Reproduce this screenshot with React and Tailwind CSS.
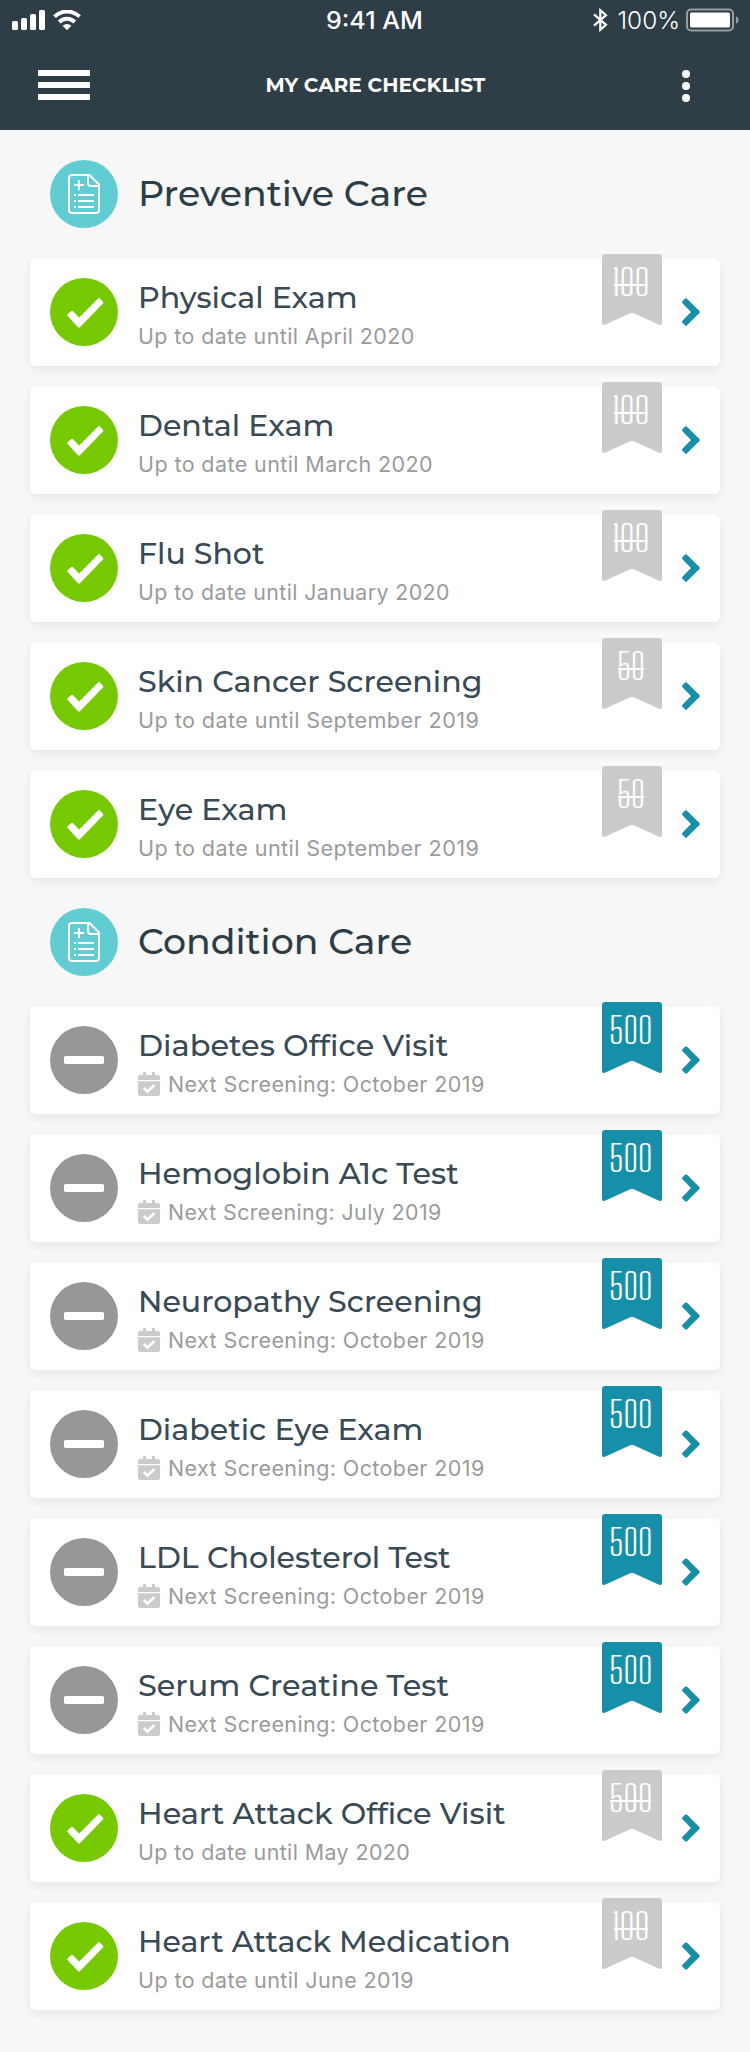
import React, { useLayoutEffect, useRef, useState } from "react";

function FitText({ width, className = "", center = false, children }) {
  const ref = useRef(null);
  const [scale, setScale] = useState(1);
  useLayoutEffect(() => {
    const fit = () => {
      if (ref.current) setScale(width / ref.current.offsetWidth);
    };
    fit();
    document.fonts?.ready.then(fit);
  }, [width, children]);
  return (
    <span
      ref={ref}
      className={`inline-block whitespace-nowrap ${center ? "origin-center" : "origin-left"} ${className}`}
      style={{ transform: `scaleX(${scale})` }}
    >
      {children}
    </span>
  );
}

const preventive = [
  { title: "Physical Exam", w: 220, note: "Up to date until April 2020", nw: 277, points: "100", done: true },
  { title: "Dental Exam", w: 196, note: "Up to date until March 2020", nw: 295, points: "100", done: true },
  { title: "Flu Shot", w: 126, note: "Up to date until January 2020", nw: 312, points: "100", done: true },
  { title: "Skin Cancer Screening", w: 344, note: "Up to date until September 2019", nw: 341, points: "50", done: true },
  { title: "Eye Exam", w: 150, note: "Up to date until September 2019", nw: 341, points: "50", done: true },
];

const condition = [
  { title: "Diabetes Office Visit", w: 310, note: "Next Screening: October 2019", nw: 317, points: "500" },
  { title: "Hemoglobin A1c Test", w: 321, note: "Next Screening: July 2019", nw: 274, points: "500" },
  { title: "Neuropathy Screening", w: 345, note: "Next Screening: October 2019", nw: 317, points: "500" },
  { title: "Diabetic Eye Exam", w: 285, note: "Next Screening: October 2019", nw: 317, points: "500" },
  { title: "LDL Cholesterol Test", w: 313, note: "Next Screening: October 2019", nw: 317, points: "500" },
  { title: "Serum Creatine Test", w: 311, note: "Next Screening: October 2019", nw: 317, points: "500" },
  { title: "Heart Attack Office Visit", w: 368, note: "Up to date until May 2020", nw: 272, points: "500", done: true },
  { title: "Heart Attack Medication", w: 373, note: "Up to date until June 2019", nw: 276, points: "100", done: true },
];

const pointWidths = { 50: 28, 100: 38, 500: 43 };
const strikeWidths = { 50: 26, 100: 34, 500: 41 };

function StatusBar() {
  return (
    <div className="grid h-10 grid-cols-3 items-center pl-3 pr-[10px]">
      <div className="flex items-center gap-2">
        <svg width="33" height="20" viewBox="0 0 33 20" fill="white">
          <rect x="0" y="11" width="6" height="9" rx="1.5" />
          <rect x="9" y="8" width="6" height="12" rx="1.5" />
          <rect x="18" y="4" width="6" height="16" rx="1.5" />
          <rect x="27" y="0" width="6" height="20" rx="1.5" />
        </svg>
        <svg width="28" height="20" viewBox="0 0 28 20" fill="none" stroke="white" strokeWidth="4">
          <path d="M1.5 6.7a17.7 17.7 0 0 1 25 0" />
          <path d="M6.2 12a11 11 0 0 1 15.6 0" />
          <path d="M9.6 15.8a6.2 6.2 0 0 1 8.8 0L14 20.2Z" fill="white" stroke="none" />
        </svg>
      </div>
      <div className="pr-[3px] pt-[3px] text-center leading-6">
        <FitText width={97} center className="text-[24px] font-medium text-white">9:41 AM</FitText>
      </div>
      <div className="flex items-center justify-end">
        <svg width="15" height="24" viewBox="0 0 15 24" fill="none" stroke="white" strokeWidth="2.2" className="mr-[10px]">
          <path d="M1 6.3 13 16.8 7.3 21.8V2.2L13 7.2 1 17.7" />
        </svg>
        <FitText width={63} center className="pt-[2px] text-[24px] font-light leading-6 text-white">100%</FitText>
        <svg width="54" height="24" viewBox="0 0 54 24" className="ml-[6px]">
          <rect x="1" y="1.5" width="46" height="21" rx="4" fill="none" stroke="#959da1" strokeWidth="2" />
          <rect x="4" y="4.5" width="40" height="15" rx="1.5" fill="white" />
          <path d="M50 8.5c3.500 1 3.500 6 0 7Z" fill="#959da1" />
        </svg>
      </div>
    </div>
  );
}

function NavBar() {
  return (
    <div className="flex h-[90px] items-center justify-between px-[38px]">
      <svg width="52" height="30" viewBox="0 0 52 30" fill="white">
        <rect width="52" height="6" />
        <rect y="12" width="52" height="6" />
        <rect y="24" width="52" height="6" />
      </svg>
      <h1 className="font-[Montserrat,Inter,sans-serif] text-[19.5px] font-bold leading-6 text-white">
        <FitText width={220} center>MY CARE CHECKLIST</FitText>
      </h1>
      <svg width="52" height="32" viewBox="0 0 52 32" fill="white" className="mt-[2px]">
        <circle cx="26" cy="4" r="4" />
        <circle cx="26" cy="16" r="4" />
        <circle cx="26" cy="28" r="4" />
      </svg>
    </div>
  );
}

function SectionHeader({ title, width }) {
  return (
    <div className="flex items-center gap-5 px-5 py-[30px]">
      <svg width="68" height="68" viewBox="0 0 68 68" fill="none" stroke="white" strokeWidth="2">
        <circle cx="34" cy="34" r="34" fill="#61cdd2" stroke="none" />
        <path d="M22 15h17.500L49 24.500V50a3 3 0 0 1-3 3H22a3 3 0 0 1-3-3V18a3 3 0 0 1 3-3Z" />
        <path d="M38 15v8a3 3 0 0 0 3 3h8" />
        <path d="M24 25h10M29 20v10M24 35h2M28 35h16M24 41h2M28 41h16M24 47h2M28 47h16" />
      </svg>
      <h2 className="pb-[2px] font-[Montserrat,Inter,sans-serif] text-[36px] font-medium leading-[44px] text-[#2d3d46]">
        <FitText width={width}>{title}</FitText>
      </h2>
    </div>
  );
}

function StatusIcon({ done }) {
  return done ? (
    <svg width="68" height="68" viewBox="0 0 68 68">
      <circle cx="34" cy="34" r="34" fill="#76c900" />
      <path
        d="M18.500 37.200 22 34.200 29.200 41.400 49 21.500 52 24.700 29 48.300Z"
        fill="white"
        stroke="white"
        strokeWidth="2.600"
        strokeLinejoin="round"
      />
    </svg>
  ) : (
    <svg width="68" height="68" viewBox="0 0 68 68">
      <circle cx="34" cy="34" r="34" fill="#979797" />
      <rect x="14" y="30" width="40" height="8" rx="1.500" fill="white" />
    </svg>
  );
}

function CalendarIcon() {
  return (
    <svg width="22" height="24" viewBox="0 0 22 24" fill="#cbcbcb">
      <path d="M0 8V5a2 2 0 0 1 2-2h3V.500a.500.500 0 0 1 .500-.500h2a.500.500 0 0 1 .500.500V3h6V.500a.500.500 0 0 1 .500-.500h2a.500.500 0 0 1 .500.500V3h3a2 2 0 0 1 2 2v3Z" />
      <path d="M0 9.200h22V22a2 2 0 0 1-2 2H2a2 2 0 0 1-2-2Z" />
      <path d="m5.800 16 3.700 3.700 7-6.700" fill="none" stroke="white" strokeWidth="2.700" />
    </svg>
  );
}

function Ribbon({ points, done }) {
  return (
    <div className="absolute right-[58px] -top-1 h-[71px] w-[60px]">
      <svg width="60" height="71" viewBox="0 0 60 71" className="absolute inset-0">
        <path
          d="M3 0h54a3 3 0 0 1 3 3v66q0 2.500-3 1.700L33 59.800q-3-1.400-6 0L3 70.700Q0 71.500 0 69V3a3 3 0 0 1 3-3Z"
          fill={done ? "#cbcbcb" : "#178fa9"}
        />
      </svg>
      <div className="relative flex h-[58px] items-center justify-center pr-[3px]">
        <FitText
          width={pointWidths[points]}
          center
          className="font-['Big_Shoulders_Display',Roboto,sans-serif] text-[36px] font-[360] leading-none tracking-[-0.8px] text-white"
        >
          {points}
        </FitText>
        {done && (
          <span
            className="absolute top-[30px] h-[2px] bg-white"
            style={{ width: strikeWidths[points] }}
          />
        )}
      </div>
    </div>
  );
}

function Card({ item }) {
  return (
    <li className="relative flex h-[108px] items-center rounded-[6px] bg-white pl-5 pr-5 shadow-[0_4px_10px_rgba(0,0,0,0.07)]">
      <StatusIcon done={item.done} />
      <div className="ml-5 flex-1 pt-[10px]">
        <h3 className="h-[38px] font-[Montserrat,Inter,sans-serif] text-[30px] font-medium leading-[38px] text-[#3a4a54]">
          <FitText width={item.w}>{item.title}</FitText>
        </h3>
        <p className="flex h-[38px] items-center gap-2 text-[21.5px] font-normal leading-[38px] tracking-[0.4px] text-[#9b9b9b]">
          {!item.done && <CalendarIcon />}
          <FitText width={item.nw}>{item.note}</FitText>
        </p>
      </div>
      <svg width="18" height="28" viewBox="0 0 18 28" fill="#178fa9" stroke="#178fa9" strokeWidth="3" strokeLinejoin="round">
        <path d="M4 1.800 16.300 14 4 26.200 1.600 23.700 10.900 14 1.600 4.300Z" />
      </svg>
      <Ribbon points={item.points} done={item.done} />
    </li>
  );
}

function Section({ title, width, items }) {
  return (
    <section>
      <SectionHeader title={title} width={width} />
      <ul className="flex flex-col gap-5">
        {items.map((item) => (
          <Card key={item.title} item={item} />
        ))}
      </ul>
    </section>
  );
}

export default function App() {
  return (
    <div className="min-h-[2052px] w-[750px] bg-[#f7f7f7] font-[Inter,sans-serif]">
      <header className="bg-[#2e3d46]">
        <StatusBar />
        <NavBar />
      </header>
      <main className="px-[30px]">
        <Section title="Preventive Care" width={290} items={preventive} />
        <Section title="Condition Care" width={274} items={condition} />
      </main>
    </div>
  );
}
